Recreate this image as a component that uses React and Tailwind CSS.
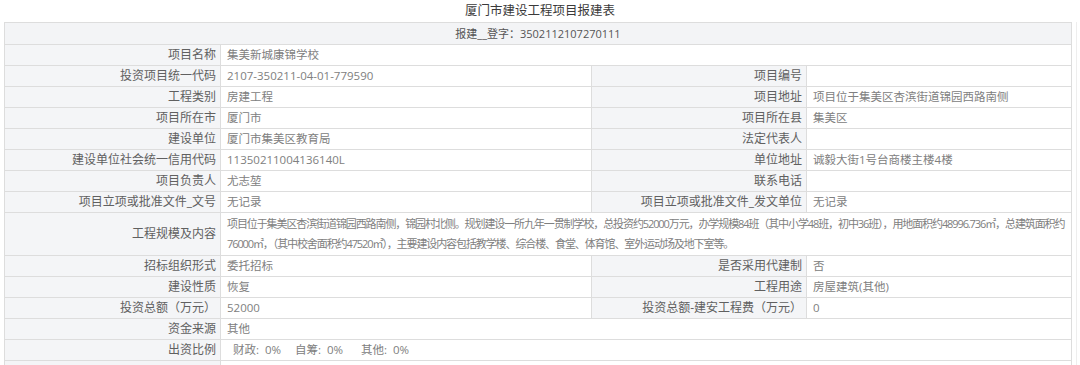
const font = { fontFamily: '"Open Sans", "Noto Sans CJK SC", "Microsoft YaHei", sans-serif' };

function Label({ children, className = "" }) {
    return (
        <div className={`shrink-0 bg-[#f4f5f7] pr-[4px] text-[12px] text-[#606060] border-r border-[#dddddd] flex items-center justify-end whitespace-nowrap ${className}`}>
            {children}
        </div>
    );
}

function Value({ children, className = "" }) {
    return <div className={`pl-[6px] text-[11.5px] text-[#808080] flex items-center whitespace-nowrap overflow-hidden ${className}`}>{children}</div>;
}

function Row({ label, value }) {
    return (
        <div className="flex h-[21px] border-b border-[#dddddd]">
            <Label className="w-[216px]">{label}</Label>
            <Value className="flex-1">{value}</Value>
        </div>
    );
}

function Row2({ label, value, label2, value2 }) {
    return (
        <div className="flex h-[21px] border-b border-[#dddddd]">
            <Label className="w-[216px]">{label}</Label>
            <Value className="w-[371px] shrink-0 border-r border-[#dddddd]">{value}</Value>
            <Label className="w-[215px]">{label2}</Label>
            <Value className="flex-1">{value2}</Value>
        </div>
    );
}

export default function App() {
    return (
        <div className="w-[1080px] h-[365px] bg-white overflow-hidden leading-[20px]" style={font}>
            <div className="h-[22px] flex items-center justify-center text-[12.5px] font-normal text-[#3a3a3a]">厦门市建设工程项目报建表</div>
            <div className="ml-[4px] w-[1073px] border-r border-[#eeeeee]">
                <div className="w-[1068px] border-l border-r border-t border-[#dddddd]">
                    <div className="h-[22px] bg-[#f3f4f6] border-b border-[#dddddd] flex items-center justify-center text-[11px] text-[#555]">
                        报建__登字：3502112107270111
                    </div>
                    <Row label="项目名称" value="集美新城康锦学校" />
                    <Row2 label="投资项目统一代码" value="2107-350211-04-01-779590" label2="项目编号" value2="" />
                    <Row2 label="工程类别" value="房建工程" label2="项目地址" value2="项目位于集美区杏滨街道锦园西路南侧" />
                    <Row2 label="项目所在市" value="厦门市" label2="项目所在县" value2="集美区" />
                    <Row2 label="建设单位" value="厦门市集美区教育局" label2="法定代表人" value2="" />
                    <Row2 label="建设单位社会统一信用代码" value="11350211004136140L" label2="单位地址" value2="诚毅大街1号台商楼主楼4楼" />
                    <Row2 label="项目负责人" value="尤志堃" label2="联系电话" value2="" />
                    <Row2 label="项目立项或批准文件_文号" value="无记录" label2="项目立项或批准文件_发文单位" value2="无记录" />
                    <div className="flex h-[43px] border-b border-[#dddddd]">
                        <Label className="w-[216px]">工程规模及内容</Label>
                        <div className="flex-1 pl-[6px] text-[11px] tracking-[-1.1px] text-[#808080] flex flex-col justify-center overflow-hidden">
                            <div className="whitespace-nowrap">项目位于集美区杏滨街道锦园西路南侧，锦园村北侧。规划建设一所九年一贯制学校，总投资约52000万元，办学规模84班（其中小学48班，初中36班），用地面积约48996.736㎡，总建筑面积约</div>
                            <div className="whitespace-nowrap">76000㎡，（其中校舍面积约47520㎡），主要建设内容包括教学楼、综合楼、食堂、体育馆、室外运动场及地下室等。</div>
                        </div>
                    </div>
                    <Row2 label="招标组织形式" value="委托招标" label2="是否采用代建制" value2="否" />
                    <Row2 label="建设性质" value="恢复" label2="工程用途" value2="房屋建筑(其他)" />
                    <Row2 label="投资总额（万元）" value="52000" label2="投资总额-建安工程费（万元）" value2="0" />
                    <Row label="资金来源" value="其他" />
                    <Row
                        label="出资比例"
                        value={
                            <span className="pl-[6px] flex">
                                <span className="w-[62px]">财政:<span className="ml-[6px]">0%</span></span>
                                <span className="w-[66px]">自筹:<span className="ml-[6px]">0%</span></span>
                                <span>其他:<span className="ml-[6px]">0%</span></span>
                            </span>
                        }
                    />
                    <Row label="" value="" />
                </div>
            </div>
        </div>
    );
}
